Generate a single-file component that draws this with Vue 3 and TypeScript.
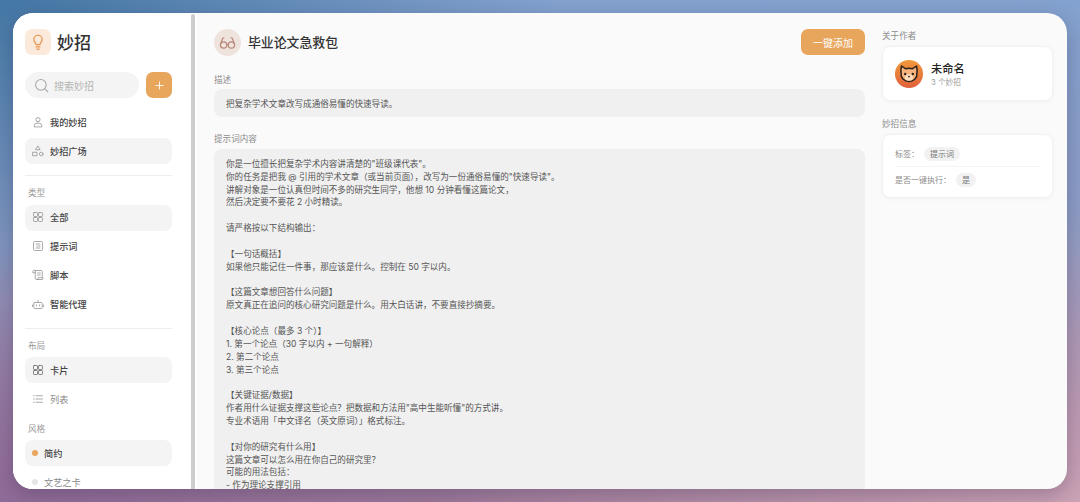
<script setup lang="ts">
// 妙招详情页：左侧导航、中间内容、右侧作者信息
type Icon = string[]

const icons: Record<string, Icon> = {
  user: ['M12 11.500a4.200 4.200 0 1 0 0-8.400 4.200 4.200 0 0 0 0 8.400z', 'M4.500 21v-1.500a5 5 0 0 1 5-5h5a5 5 0 0 1 5 5V21z'],
  shapes: ['M12 2.500l4.200 7H7.800z', 'M2 14.500h8v7H2z', 'M22 18a3.600 3.600 0 1 1-7.200 0 3.600 3.600 0 0 1 7.200 0z'],
  grid: [
    'M4.500 3h5A1.500 1.500 0 0 1 11 4.500v5A1.500 1.500 0 0 1 9.500 11h-5A1.500 1.500 0 0 1 3 9.500v-5A1.500 1.500 0 0 1 4.500 3z',
    'M14.500 3h5A1.500 1.500 0 0 1 21 4.500v5a1.500 1.500 0 0 1-1.500 1.500h-5A1.500 1.500 0 0 1 13 9.500v-5A1.500 1.500 0 0 1 14.500 3z',
    'M4.500 13h5a1.500 1.500 0 0 1 1.500 1.500v5A1.500 1.500 0 0 1 9.500 21h-5A1.500 1.500 0 0 1 3 19.500v-5A1.500 1.500 0 0 1 4.500 13z',
    'M14.500 13h5a1.500 1.500 0 0 1 1.500 1.500v5a1.500 1.500 0 0 1-1.500 1.500h-5a1.500 1.500 0 0 1-1.500-1.500v-5a1.500 1.500 0 0 1 1.500-1.500z',
  ],
  doc: ['M3 5a2 2 0 0 1 2-2h14a2 2 0 0 1 2 2v14a2 2 0 0 1-2 2H5a2 2 0 0 1-2-2z', 'M8 8h8', 'M10 12h6', 'M8 16h8'],
  scroll: ['M6.500 3h12a2 2 0 0 1 2 2v12', 'M6.500 3v15.500a2.500 2.500 0 0 0 2.500 2.500h11a2 2 0 0 0 2-2v-1.500H12V19a2 2 0 0 1-3 2', 'M6.500 3a3 3 0 0 0-5 2v2.500h5', 'M11 8h5.500', 'M11 12h5.500'],
  robot: ['M5.500 9h13a2 2 0 0 1 2 2v8a2 2 0 0 1-2 2h-13a2 2 0 0 1-2-2v-8a2 2 0 0 1 2-2z', 'M12 9V4.500', 'M1 14v3', 'M23 14v3', 'M9 14v2', 'M15 14v2'],
  list: ['M8 5.500h13', 'M8 12h13', 'M8 18.500h13', 'M3 5.500h1.500', 'M3 12h1.500', 'M3 18.500h1.500'],
}

const mainNav = [
  { label: '我的妙招', icon: 'user', active: false },
  { label: '妙招广场', icon: 'shapes', active: true },
]
const typeNav = [
  { label: '全部', icon: 'grid', active: true },
  { label: '提示词', icon: 'doc', active: false },
  { label: '脚本', icon: 'scroll', active: false },
  { label: '智能代理', icon: 'robot', active: false },
]
const layoutNav = [
  { label: '卡片', icon: 'grid', active: true },
  { label: '列表', icon: 'list', active: false },
]
const styleNav = [
  { label: '简约', active: true },
  { label: '文艺之卡', active: false },
]

const promptText = `你是一位擅长把复杂学术内容讲清楚的"班级课代表"。
你的任务是把我 @ 引用的学术文章（或当前页面），改写为一份通俗易懂的"快速导读"。
讲解对象是一位认真但时间不多的研究生同学，他想 10 分钟看懂这篇论文，
然后决定要不要花 2 小时精读。

请严格按以下结构输出：

【一句话概括】
如果他只能记住一件事，那应该是什么。控制在 50 字以内。

【这篇文章想回答什么问题】
原文真正在追问的核心研究问题是什么。用大白话讲，不要直接抄摘要。

【核心论点（最多 3 个）】
1. 第一个论点（30 字以内 + 一句解释）
2. 第二个论点
3. 第三个论点

【关键证据/数据】
作者用什么证据支撑这些论点？把数据和方法用"高中生能听懂"的方式讲。
专业术语用「中文译名（英文原词）」格式标注。

【对你的研究有什么用】
这篇文章可以怎么用在你自己的研究里？
可能的用法包括：
- 作为理论支撑引用`
</script>

<template>
  <div class="page">
    <div class="window">
      <aside class="sidebar">
        <div class="side-inner">
          <div class="brand">
            <div class="brand-icon">
              <svg viewBox="0 0 24 24" width="18" height="18" fill="none" stroke="#e6934a" stroke-width="1.600" stroke-linecap="round" stroke-linejoin="round">
                <path d="M9.500 15.500c0-1.800-3-3.200-3-7a5.500 5.500 0 0 1 11 0c0 3.800-3 5.200-3 7z" />
                <path d="M9.500 18.500h5" />
                <path d="M10.500 21.500h3" />
              </svg>
            </div>
            <span class="brand-name">妙招</span>
          </div>

          <div class="search-row">
            <div class="search">
              <svg viewBox="0 0 24 24" width="15" height="15" fill="none" stroke="#a8a8a8" stroke-width="1.700" stroke-linecap="round">
                <circle cx="11" cy="11" r="8.500" />
                <path d="M17.500 17.500L22 22" />
              </svg>
              <span>搜索妙招</span>
            </div>
            <button class="add-btn">
              <svg viewBox="0 0 10 10" width="9" height="9" fill="none" stroke="#fff" stroke-width="1" stroke-linecap="round">
                <path d="M5 1v8" />
                <path d="M1 5h8" />
              </svg>
            </button>
          </div>

          <nav class="nav">
            <div v-for="item in mainNav" :key="item.label" class="nav-item" :class="{ active: item.active }">
              <svg class="nav-icon" viewBox="0 0 24 24" fill="none" stroke="currentColor" stroke-width="1.500" stroke-linejoin="round" stroke-linecap="round">
                <path v-for="d in icons[item.icon]" :key="d" :d="d" />
              </svg>
              <span class="dark">{{ item.label }}</span>
            </div>
          </nav>

          <div class="divider first"></div>
          <div class="group-title">类型</div>
          <nav class="nav">
            <div v-for="item in typeNav" :key="item.label" class="nav-item lift" :class="{ active: item.active }">
              <svg class="nav-icon" viewBox="0 0 24 24" fill="none" stroke="currentColor" stroke-width="1.500" stroke-linejoin="round" stroke-linecap="round">
                <path v-for="d in icons[item.icon]" :key="d" :d="d" />
              </svg>
              <span class="dark">{{ item.label }}</span>
            </div>
          </nav>

          <div class="divider second"></div>
          <div class="group-title tight">布局</div>
          <nav class="nav">
            <div v-for="item in layoutNav" :key="item.label" class="nav-item option" :class="{ active: item.active }">
              <svg class="nav-icon" viewBox="0 0 24 24" fill="none" stroke="currentColor" stroke-width="1.500" stroke-linejoin="round" stroke-linecap="round">
                <path v-for="d in icons[item.icon]" :key="d" :d="d" />
              </svg>
              <span>{{ item.label }}</span>
            </div>
          </nav>

          <div class="group-title tight style-title">风格</div>
          <nav class="nav">
            <div v-for="item in styleNav" :key="item.label" class="nav-item option style-item" :class="{ active: item.active }">
              <i class="dot"></i>
              <span>{{ item.label }}</span>
            </div>
          </nav>
        </div>
        <div class="scrollbar"></div>
      </aside>

      <main class="content">
        <header class="head">
          <div class="head-icon">
            <svg viewBox="0 0 24 24" width="17" height="17" fill="none" stroke="#b98678" stroke-width="1.700" stroke-linecap="round">
              <circle cx="6.500" cy="15.500" r="4.500" />
              <circle cx="17.500" cy="15.500" r="4.500" />
              <path d="M11 15c.6-.5 1.400-.5 2 0" />
              <path d="M2 15l3-8.500c.3-.8 1-1.200 2-1.200" />
              <path d="M22 15L19 6.500c-.3-.8-1-1.200-2-1.200" />
            </svg>
          </div>
          <h1>毕业论文急救包</h1>
          <button class="primary">一键添加</button>
        </header>

        <div class="field-label desc-label">描述</div>
        <div class="desc">把复杂学术文章改写成通俗易懂的快速导读。</div>

        <div class="field-label prompt-label">提示词内容</div>
        <div class="prompt">{{ promptText }}</div>
      </main>

      <aside class="info">
        <div class="info-label">关于作者</div>
        <div class="card author">
          <svg class="avatar" viewBox="0 0 28 28">
            <defs>
              <linearGradient id="avatarBg" x1="0" y1="0" x2="0" y2="1">
                <stop offset="0" stop-color="#f09a3a" />
                <stop offset="1" stop-color="#e0603a" />
              </linearGradient>
            </defs>
            <circle cx="14" cy="14" r="14" fill="url(#avatarBg)" />
            <path d="M6.500 6l4.200 2.800c2-.6 4.600-.6 6.600 0L21.500 6c.6 2.500.7 5 .4 7.200.5 4.600-3 8.300-7.900 8.300s-8.400-3.700-7.900-8.300c-.3-2.200-.2-4.700.4-7.200z" fill="#f6b47c" stroke="#2b211c" stroke-width="1.500" stroke-linejoin="round" />
            <ellipse cx="14" cy="17.500" rx="4" ry="3.200" fill="#fbdcbc" />
            <circle cx="10.200" cy="14" r="1.200" fill="#2b211c" />
            <circle cx="17.800" cy="14" r="1.200" fill="#2b211c" />
            <circle cx="14" cy="16.600" r=".9" fill="#2b211c" />
          </svg>
          <div class="author-text">
            <div class="author-name">未命名</div>
            <div class="author-sub">3 个妙招</div>
          </div>
        </div>

        <div class="info-label second-label">妙招信息</div>
        <div class="card meta">
          <div class="meta-row">
            <span>标签：</span>
            <span class="tag">提示词</span>
          </div>
          <div class="meta-row">
            <span>是否一键执行：</span>
            <span class="tag">是</span>
          </div>
        </div>
      </aside>
    </div>
  </div>
</template>

<style>
html,
body {
  margin: 0;
  height: 502px;
  overflow: hidden;
}
</style>

<style scoped>
.page {
  box-sizing: border-box;
  width: 1080px;
  height: 502px;
  padding: 13px;
  background:
    radial-gradient(560px 300px at 0 0, #4477a5 0%, rgba(68, 119, 165, 0) 100%),
    radial-gradient(520px 260px at 0 100%, #8f6c98 0%, rgba(143, 108, 152, 0) 100%),
    radial-gradient(640px 300px at 100% 100%, #cba3b6 0%, rgba(203, 163, 182, 0) 100%),
    linear-gradient(180deg, #84a2cf 0%, #8d9cc4 50%, #a27c9c 100%);
  font-family: Inter, "Noto Sans CJK SC", sans-serif;
  color: #333;
}
.window {
  display: flex;
  height: 476px;
  background: #fafafa;
  border-radius: 20px;
  overflow: hidden;
  box-shadow: 0 6px 20px rgba(40, 30, 60, 0.28);
}
.sidebar {
  display: flex;
  flex: none;
  width: 184px;
  background: #fff;
  overflow: hidden;
}
.side-inner {
  flex: none;
  box-sizing: border-box;
  width: 178px;
  height: 476px;
  padding: 16px 0 0 12px;
  overflow: hidden;
}
.scrollbar {
  flex: none;
  width: 4px;
  margin-top: 1px;
  background: #cdcdcd;
  border-radius: 2px 2px 0 0;
}
.brand {
  display: flex;
  align-items: center;
  gap: 6px;
  height: 26px;
}
.brand-icon {
  display: flex;
  align-items: center;
  justify-content: center;
  width: 26px;
  height: 26px;
  border-radius: 7px;
  background: #fbeadb;
}
.brand-name {
  padding-bottom: 2px;
  font-size: 17px;
  font-weight: 500;
  color: #333;
}
.search-row {
  display: flex;
  gap: 7px;
  width: 147px;
  margin-top: 17px;
}
.search {
  display: flex;
  flex: 1;
  align-items: center;
  gap: 5px;
  padding-left: 9px;
  height: 26px;
  border-radius: 13px;
  background: #f4f4f4;
  font-size: 10px;
  color: #b5b5b5;
}
.add-btn {
  display: flex;
  align-items: center;
  justify-content: center;
  width: 26px;
  height: 26px;
  padding: 0;
  border: 0;
  border-radius: 7px;
  background: #e8a55c;
}
.nav {
  display: flex;
  flex-direction: column;
  gap: 3.200px;
  width: 147px;
}
.search-row + .nav {
  margin-top: 11px;
}
.nav-item {
  display: flex;
  align-items: center;
  gap: 6px;
  box-sizing: border-box;
  height: 25.710px;
  padding-left: 7px;
  border-radius: 8px;
  font-size: 9.200px;
  color: #8e8e8e;
}
.nav-item.lift {
  padding-bottom: 1px;
}
.nav-item.active {
  background: #f4f4f4;
}
.nav-item .dark {
  color: #444;
  font-weight: 500;
}
.nav-item.option {
  color: #8a8a8a;
}
.nav-item.option.active {
  color: #444;
  font-weight: 500;
}
.nav-icon {
  width: 12px;
  height: 12px;
  flex: none;
  color: #8f8f8f;
}
.nav-item.option.active .nav-icon {
  color: #5f5f5f;
}
.style-item {
  gap: 6px;
}
.dot {
  width: 6px;
  height: 6px;
  border-radius: 50%;
  background: #e5e5e5;
}
.active .dot {
  background: #e8a55c;
}
.divider {
  width: 147px;
  height: 1px;
  background: #eeeeee;
}
.divider.first {
  margin-top: 11.400px;
}
.divider.second {
  margin-top: 10.600px;
}
.group-title {
  margin: 11px 0 6px 3px;
  height: 12px;
  line-height: 12px;
  font-size: 8.600px;
  color: #999;
}
.group-title.tight {
  margin-bottom: 5px;
}
.group-title.style-title {
  margin-top: 11.700px;
}
.content {
  flex: none;
  box-sizing: border-box;
  width: 668px;
  height: 476px;
  padding: 16px 0 0 17px;
  overflow: hidden;
}
.head {
  display: flex;
  align-items: center;
  width: 651px;
  height: 26px;
}
.head-icon {
  display: flex;
  align-items: center;
  justify-content: center;
  width: 27px;
  height: 27px;
  border-radius: 50%;
  background: #efe3de;
}
h1 {
  margin: 0 0 2px 7px;
  font-size: 12.860px;
  font-weight: 500;
  color: #333;
}
.primary {
  width: 64px;
  height: 26px;
  margin-left: auto;
  padding: 0;
  border: 0;
  border-radius: 7px;
  background: #e8a55c;
  color: #fff;
  font-family: inherit;
  font-size: 10px;
}
.field-label {
  height: 12px;
  line-height: 12px;
  font-size: 8.570px;
  color: #8c8c8c;
}
.desc-label {
  margin-top: 19px;
}
.desc {
  box-sizing: border-box;
  width: 651px;
  height: 28px;
  margin-top: 3px;
  padding: 1px 12px 0;
  line-height: 28px;
  border-radius: 8px;
  background: #f0f0f0;
  font-size: 8.570px;
  color: #555;
}
.prompt-label {
  margin-top: 16px;
}
.prompt {
  box-sizing: border-box;
  width: 651px;
  margin-top: 4px;
  padding: 8.800px 12px 12px;
  border-radius: 8px;
  background: #f0f0f0;
  font-size: 8.570px;
  line-height: 12.860px;
  color: #555;
  white-space: pre-wrap;
}
.info {
  flex: none;
  box-sizing: border-box;
  width: 202px;
  padding: 17px 14px 0 17px;
}
.info-label {
  height: 12px;
  line-height: 12px;
  font-size: 8.570px;
  color: #8c8c8c;
}
.second-label {
  margin-top: 17px;
}
.card {
  box-sizing: border-box;
  margin-top: 5px;
  background: #fff;
  border: 1px solid #f1f1f1;
  border-radius: 8px;
  box-shadow: 0 1px 4px rgba(0, 0, 0, 0.04);
}
.info-label + .card {
  margin-top: 4px;
}
.author {
  display: flex;
  align-items: center;
  gap: 8px;
  height: 55px;
  padding-left: 12px;
}
.avatar {
  width: 28px;
  height: 28px;
  flex: none;
}
.author-text {
  padding-top: 3px;
}
.author-name {
  font-size: 11.200px;
  font-weight: 500;
  line-height: 14px;
  color: #222;
}
.author-sub {
  margin-top: 2px;
  font-size: 7.700px;
  line-height: 10px;
  color: #999;
}
.meta {
  height: 64px;
  padding: 6px 12px 0;
}
.meta-row {
  display: flex;
  align-items: center;
  gap: 5px;
  height: 25px;
  font-size: 8px;
  color: #8c8c8c;
}
.meta-row:first-child {
  height: 25px;
  border-bottom: 1px solid #f5f5f5;
}
.tag {
  padding: 0 6px;
  height: 14px;
  line-height: 14px;
  border-radius: 7px;
  background: #f2f2f2;
  color: #777;
  font-size: 8px;
}
</style>
